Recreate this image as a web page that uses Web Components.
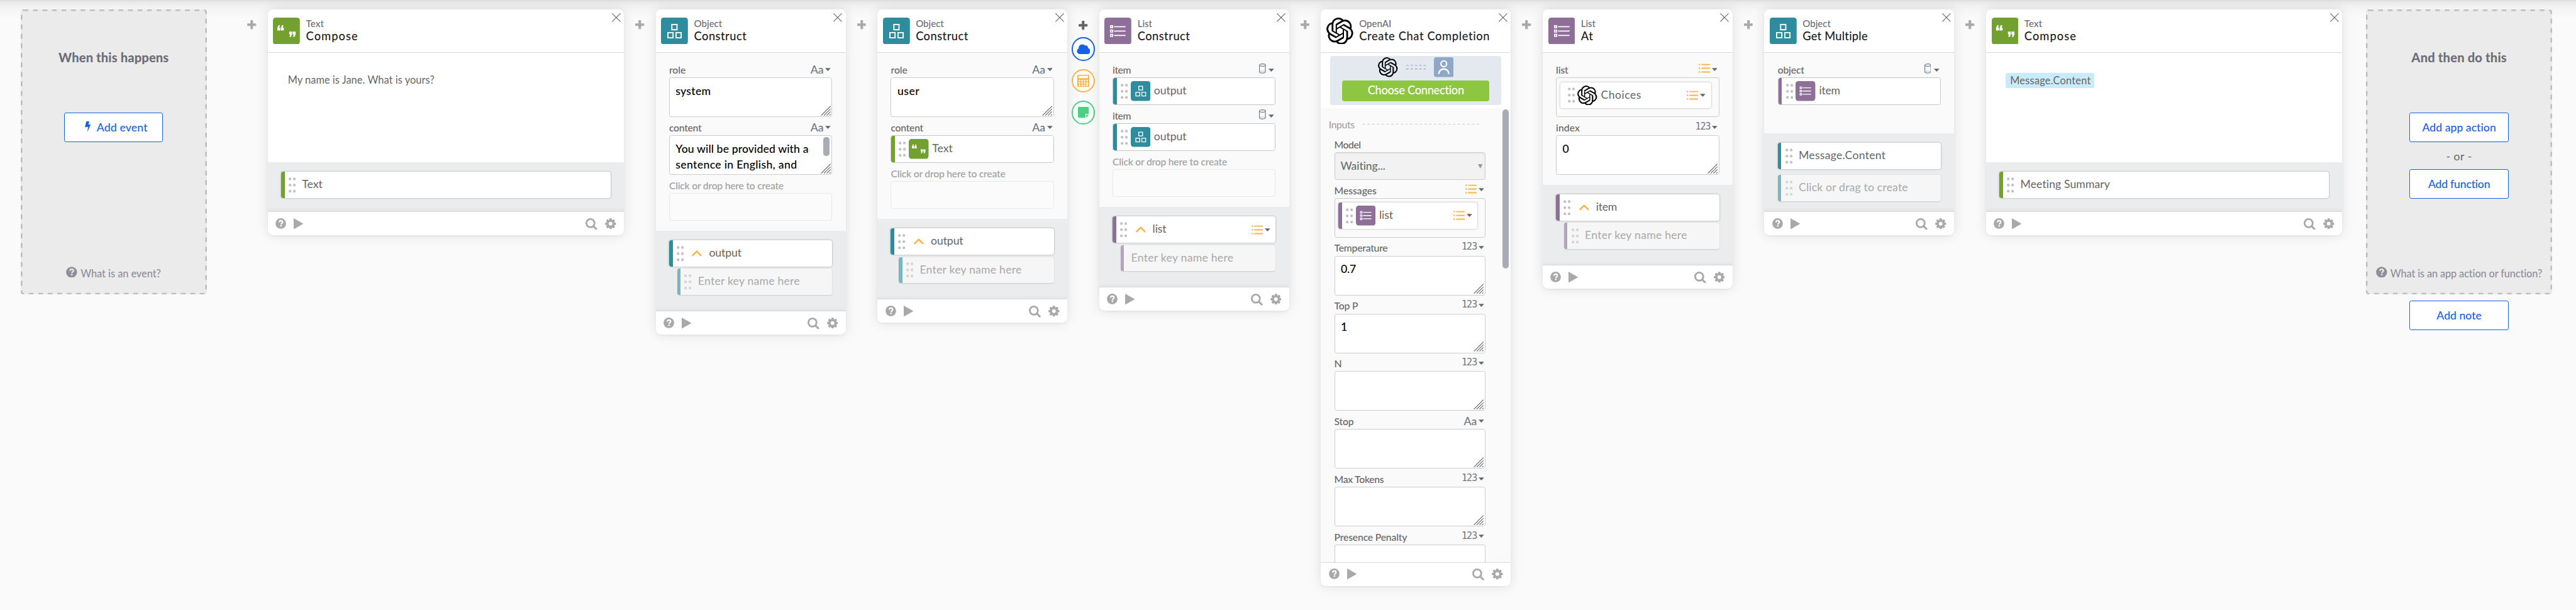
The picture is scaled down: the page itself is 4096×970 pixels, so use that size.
<!DOCTYPE html>
<html lang="en">
<head>
<meta charset="utf-8">
<title>Flow editor</title>
<style>
html{background:#fafafa;overflow:hidden}
body{margin:0;width:4096px;height:970px;overflow:hidden;font-family:Lato,"Open Sans",sans-serif;color:#666}
</style>
</head>
<body>
<flow-board>
  <drop-panel heading="When this happens" hw="277" help="What is an event?" pw="201">
    <blue-button icon="bolt" w="127">Add event</blue-button>
  </drop-panel>
  <plus-mark style="margin-left:74px"></plus-mark>

  <flow-card wide icon="quote" kind="Text" kw="43" name="Compose" nw="130" body="276">
    <fit-text w="371" style="font-size:26px;line-height:34px;padding:51px 0 0 17px">My name is Jane. What is yours?</fit-text>
    <flow-token slot="out" color="#73a12f" label="Text" w="50"></flow-token>
  </flow-card>
  <plus-mark></plus-mark>

  <flow-card icon="boxes" kind="Object" kw="69" name="Construct" nw="131">
    <flow-field label="role" w="40" type="Aa"><text-area><fit-text w="87">system</fit-text></text-area></flow-field>
    <flow-field label="content" w="80" type="Aa"><text-area thumb><fit-text w="335">You will be provided with a</fit-text><fit-text w="305">sentence in English, and</fit-text></text-area></flow-field>
    <flow-field ghost label="Click or drop here to create" w="288"><drop-box ghost></drop-box></flow-field>
    <flow-token slot="out" color="#2d8c9e" chevron label="output" w="80"></flow-token>
    <flow-token slot="out" color="#2d8c9e" ghost sub label="Enter key name here" w="257"></flow-token>
  </flow-card>
  <plus-mark></plus-mark>

  <flow-card icon="boxes" kind="Object" kw="69" name="Construct" nw="131">
    <flow-field label="role" w="40" type="Aa"><text-area><fit-text w="54">user</fit-text></text-area></flow-field>
    <flow-field label="content" w="80" type="Aa"><drop-box><flow-token flat color="#73a12f" icon="quote" label="Text" w="50"></flow-token></drop-box></flow-field>
    <flow-field ghost label="Click or drop here to create" w="288"><drop-box ghost></drop-box></flow-field>
    <flow-token slot="out" color="#2d8c9e" chevron label="output" w="80"></flow-token>
    <flow-token slot="out" color="#2d8c9e" ghost sub label="Enter key name here" w="257"></flow-token>
  </flow-card>
  <plus-mark open></plus-mark>

  <flow-card icon="list" kind="List" kw="35" name="Construct" nw="131">
    <flow-field label="item" w="44" type="cyl"><drop-box><flow-token flat color="#2d8c9e" icon="boxes" label="output" w="80"></flow-token></drop-box></flow-field>
    <flow-field label="item" w="44" type="cyl"><drop-box><flow-token flat color="#2d8c9e" icon="boxes" label="output" w="80"></flow-token></drop-box></flow-field>
    <flow-field ghost label="Click or drop here to create" w="288"><drop-box ghost></drop-box></flow-field>
    <flow-token slot="out" color="#8e6f98" chevron menu label="list" w="33"></flow-token>
    <flow-token slot="out" color="#8e6f98" ghost sub nodots label="Enter key name here" w="258"></flow-token>
  </flow-card>
  <plus-mark></plus-mark>

  <flow-card icon="openai" kind="OpenAI" kw="79" name="Create Chat Completion" nw="329" scroll>
    <connection-bar slot="bar"></connection-bar>
    <section-title></section-title>
    <flow-field label="Model" w="65"><select-box></select-box></flow-field>
    <flow-field label="Messages" w="105" type="list"><drop-box tall><flow-token inset color="#8e6f98" icon="list" menu label="list" w="33"></flow-token></drop-box></flow-field>
    <flow-field label="Temperature" w="133" type="123"><text-area><fit-text w="36">0.7</fit-text></text-area></flow-field>
    <flow-field label="Top P" w="58" type="123"><text-area><fit-text>1</fit-text></text-area></flow-field>
    <flow-field label="N" type="123"><text-area></text-area></flow-field>
    <flow-field label="Stop" w="47" type="Aa"><text-area></text-area></flow-field>
    <flow-field label="Max Tokens" w="124" type="123"><text-area></text-area></flow-field>
    <flow-field label="Presence Penalty" w="182" type="123"><text-area cut></text-area></flow-field>
  </flow-card>
  <plus-mark></plus-mark>

  <flow-card icon="list" kind="List" kw="35" name="At" nw="29">
    <flow-field label="list" w="29" type="list"><drop-box tall><flow-token inset color="#fff" icon="openai" menu label="Choices" w="100"></flow-token></drop-box></flow-field>
    <flow-field label="index" w="58" type="123"><text-area><fit-text>0</fit-text></text-area></flow-field>
    <flow-token slot="out" color="#8e6f98" chevron label="item" w="51"></flow-token>
    <flow-token slot="out" color="#8e6f98" ghost sub label="Enter key name here" w="258"></flow-token>
  </flow-card>
  <plus-mark></plus-mark>

  <flow-card icon="boxes" kind="Object" kw="69" name="Get Multiple" nw="163" body="203" outgap="15">
    <flow-field label="object" w="65" type="cyl"><drop-box><flow-token flat tight color="#8e6f98" icon="list" label="item" w="51"></flow-token></drop-box></flow-field>
    <flow-token slot="out" color="#2d8c9e" label="Message.Content" w="218"></flow-token>
    <flow-token slot="out" color="#2d8c9e" ghost label="Click or drag to create" w="275"></flow-token>
  </flow-card>
  <plus-mark></plus-mark>

  <flow-card wide icon="quote" kind="Text" kw="43" name="Compose" nw="130" body="276">
    <value-chip></value-chip>
    <flow-token slot="out" color="#73a12f" label="Meeting Summary" w="225"></flow-token>
  </flow-card>

  <last-column>
    <drop-panel heading="And then do this" hw="239" help="What is an app action or function?" pw="383">
      <blue-button w="185">Add app action</blue-button>
      <or-mark></or-mark>
      <blue-button w="155">Add function</blue-button>
    </drop-panel>
    <blue-button w="112" style="margin:16px auto 0">Add note</blue-button>
  </last-column>
</flow-board>

<script>
const svg = (w, h, inner, vb) => `<svg width="${w}" height="${h}" viewBox="${vb || `0 0 ${w} ${h}`}" fill="none">${inner}</svg>`;
const QM = '<path d="M0 13.5V7L3 0h3.6L5 6.4h2.4v7.1zM9 13.5V7l3-7h3.6L14 6.4h2.4v7.1z" fill="#fff"/>';
const OPENAI = '<path fill="#000" d="M22.2819 9.8211a5.9847 5.9847 0 0 0-.5157-4.9108 6.0462 6.0462 0 0 0-6.5098-2.9A6.0651 6.0651 0 0 0 4.9807 4.1818a5.9847 5.9847 0 0 0-3.9977 2.9 6.0462 6.0462 0 0 0 .7427 7.0966 5.98 5.98 0 0 0 .511 4.9107 6.051 6.051 0 0 0 6.5146 2.9001A5.9847 5.9847 0 0 0 13.2599 24a6.0557 6.0557 0 0 0 5.7718-4.2058 5.9894 5.9894 0 0 0 3.9977-2.9001 6.0557 6.0557 0 0 0-.7475-7.0729zm-9.022 12.6081a4.4755 4.4755 0 0 1-2.8764-1.0408l.1419-.0804 4.7783-2.7582a.7948.7948 0 0 0 .3927-.6813v-6.7369l2.02 1.1686a.071.071 0 0 1 .038.052v5.5826a4.504 4.504 0 0 1-4.4945 4.4944zm-9.6607-4.1254a4.4708 4.4708 0 0 1-.5346-3.0137l.142.0852 4.783 2.7582a.7712.7712 0 0 0 .7806 0l5.8428-3.3685v2.3324a.0804.0804 0 0 1-.0332.0615L9.74 19.9502a4.4992 4.4992 0 0 1-6.1408-1.6464zM2.3408 7.8956a4.485 4.485 0 0 1 2.3655-1.9728V11.6a.7664.7664 0 0 0 .3879.6765l5.8144 3.3543-2.0201 1.1685a.0757.0757 0 0 1-.071 0l-4.8303-2.7865A4.504 4.504 0 0 1 2.3408 7.872zm16.5963 3.8558L13.1038 8.364 15.1192 7.2a.0757.0757 0 0 1 .071 0l4.8303 2.7913a4.4944 4.4944 0 0 1-.6765 8.1042v-5.6772a.79.79 0 0 0-.407-.667zm2.0107-3.0231l-.142-.0852-4.7735-2.7818a.7759.7759 0 0 0-.7854 0L9.409 9.2297V6.8974a.0662.0662 0 0 1 .0284-.0615l4.8303-2.7866a4.4992 4.4992 0 0 1 6.6802 4.66zM8.3065 12.863l-2.02-1.1638a.0804.0804 0 0 1-.038-.0567V6.0742a4.4992 4.4992 0 0 1 7.3757-3.4537l-.142.0805L8.704 5.459a.7948.7948 0 0 0-.3927.6813zm1.0976-2.3654l2.602-1.4998 2.6069 1.4998v2.9994l-2.5974 1.4997-2.6067-1.4997Z"/>';
const tile = (name, s) => {
  if (name === 'openai') return svg(s, s, OPENAI, '0 0 24 24');
  const r = s > 60 ? 7 : 9.5;
  const bg = { quote: '#73a12f', boxes: '#2d8c9e', list: '#8e6f98' }[name];
  const art = {
    quote: `<g transform="translate(11 19)">${QM}</g><g transform="translate(57.4 49) rotate(180)">${QM}</g>`,
    boxes: '<path d="M27.500 17.500h13v13h-13zM17.500 38h13v13h-13zM38 38h13v13H38z" stroke="#fff" stroke-width="3"/>',
    list: [23, 34, 45].map(y => `<path d="M15.6 ${y - 2.6}h5.4v5.2h-5.4z" stroke="#fff" stroke-width="2.6"/><path d="M24.5 ${y}H53.5" stroke="#fff" stroke-width="2.8"/>`).join('')
  }[name];
  return svg(s, s, `<rect width="68" height="68" rx="${r}" fill="${bg}"/>${art}`, '0 0 68 68');
};
const help = (s, fill, hole) => svg(s, s, `<circle cx="14" cy="14" r="13.8" fill="${fill}"/><path d="M9.8 10.6C10.2 7.6 12 6.4 14.2 6.4c2.500 0 4.500 1.500 4.500 3.900 0 3-3.900 3.200-3.900 6" stroke="${hole}" stroke-width="3.500"/><rect x="12.600" y="18.200" width="4" height="3.700" rx=".6" fill="${hole}"/>`, '0 0 28 28');
const caret = '<svg width="14" height="8" viewBox="0 0 14 8"><path d="M0 .5h14L7 7.800z" fill="#666"/></svg>';
const listIcon = svg(29, 24, [2.5, 12, 21.5].map(y => `<circle cx="2" cy="${y}" r="2" fill="#ffb142"/><path d="M8 ${y}H27.500" stroke="#ffb142" stroke-width="3" stroke-linecap="round"/>`).join(''));
const closeIcon = svg(22, 22, '<path d="M.6.6l20.800 20.800M21.400.6L.6 21.400" stroke="#666" stroke-width="1.800"/>');
const gear = svg(28, 28, [0, 45, 90, 135].map(a => `<rect x="10.900" y=".3" width="6.200" height="27.400" rx="1.800" fill="#a9a9a9" transform="rotate(${a} 14 14)"/>`).join('') + '<circle cx="14" cy="14" r="10.300" fill="#a9a9a9"/><circle cx="14" cy="14" r="4.700" fill="#fff"/>');
const searchIcon = svg(30, 30, '<circle cx="12.500" cy="12.500" r="10.300" stroke="#a9a9a9" stroke-width="4.400"/><path d="M20 20l7.300 7.300" stroke="#a9a9a9" stroke-width="4.800" stroke-linecap="round"/>');
const cylinder = svg(17, 25, '<ellipse cx="8.500" cy="4" rx="7.500" ry="3" stroke="#6b7785" stroke-width="1.800"/><path d="M1 4v17c0 1.700 3.400 3 7.500 3s7.500-1.300 7.500-3V4" stroke="#6b7785" stroke-width="1.800"/><path d="M2.500 20.500c2-1.700 10-1.700 12 0" stroke="#6b7785" stroke-width="1.200" stroke-dasharray="2 1.500"/>');
const dots = svg(18, 39, [4, 19.500, 35].map(y => `<circle cx="3.500" cy="${y}" r="3.500" fill="#c3c3c3"/><circle cx="14.500" cy="${y}" r="3.500" fill="#c3c3c3"/>`).join(''));
const fit = (t, w, css = '') => `<fit-text ${w ? `w="${w}"` : ''} style="${css}">${t}</fit-text>`;

const define = (tag, css, html) => customElements.define(tag, class extends HTMLElement {
  constructor() { super(); this.attachShadow({ mode: 'open' }); }
  connectedCallback() {
    const a = n => this.getAttribute(n), has = n => this.hasAttribute(n);
    this.shadowRoot.innerHTML = `<style>:host{display:block;box-sizing:border-box}*{box-sizing:border-box}svg{display:block;flex:none}${css}</style>` + html(a, has);
  }
});

/* One line of text whose tracking is set so that it spans the width in `w`. */
const ruler = document.createElement('canvas').getContext('2d');
customElements.define('fit-text', class extends HTMLElement {
  connectedCallback() {
    if (!this.shadowRoot) this.attachShadow({ mode: 'open' }).innerHTML = '<style>:host{display:block;white-space:nowrap;flex:none}</style><slot></slot>';
    const w = +this.getAttribute('w');
    if (!w) return;
    requestAnimationFrame(() => this.track(w));
    this.track(w);
  }
  track(w) {
    const cs = getComputedStyle(this), t = this.textContent;
    if (!t) return;
    ruler.font = `${cs.fontWeight} ${cs.fontSize} Lato`;
    this.style.letterSpacing = ((w + 2 - ruler.measureText(t).width) / t.length).toFixed(3) + 'px';
  }
});

define('flow-board', ':host{width:4096px;height:970px;overflow:hidden;background:#fafafa}.z{zoom:.62957;display:flex;align-items:flex-start;width:6506px;height:1540px;padding:24px 0 0 52px;background:linear-gradient(#dcdcdc,#e9e9e9 5px,#f0f0f0 14px,#f6f6f6 26px,#fafafa 44px)}::slotted(*){flex:none}', () => '<div class="z"><slot></slot></div>');

define('drop-panel', `
:host{position:relative;display:flex;flex-direction:column;align-items:center;width:470px;height:720px;padding:102px 4px 41px;background:#ebebec;border-radius:6px}
.edge{position:absolute;inset:0}
h2{margin:0 0 119px;font:900 32px/40px Lato,sans-serif;color:#6e6e78}
.help{display:flex;gap:8px;margin-top:auto;font-size:26px;line-height:30px;color:#8f8f99;align-items:flex-start;font-weight:500}
.help fit-text{padding-top:3px;margin-bottom:-3px}`,
(a) => `<svg class="edge" width="470" height="720" fill="none"><rect x="2" y="2" width="466" height="716" rx="5" stroke="#bdbdbd" stroke-width="4" stroke-dasharray="12 12"/></svg>
<h2>${fit(a('heading'), a('hw'))}</h2><slot></slot><div class="help">${help(28, '#8f8f99', '#ebebec')}${fit(a('help'), a('pw'))}</div>`);

define('blue-button', ':host{display:flex;align-items:center;justify-content:center;gap:14px;width:250px;height:74px;padding-bottom:1px;border:2px solid #1862e0;border-radius:5px;background:#fff;color:#1862e0;font-size:28px;line-height:34px;position:relative;font-weight:500}svg{margin:-2px 0 0 14px}',
(a, has) => (has('icon') ? svg(15, 28, '<path d="M3.500 0H11L9 8.500l6-1.200L6 27.500 8 13.500l-8 1.700z" fill="#1862e0"/>') : '') + `<slot></slot>`);
customElements.whenDefined('blue-button').then(() => document.querySelectorAll('blue-button').forEach(b => {
  if (!b.querySelector('fit-text')) b.innerHTML = fit(b.textContent.trim(), b.getAttribute('w'));
}));

define('or-mark', ':host{height:69px;line-height:72px;font-size:28px}', () => fit('- or -', 64));
define('last-column', ':host{display:flex;flex-direction:column;margin-left:60px}', () => '<slot></slot>');

define('plus-mark', `
:host{position:relative;width:80px;padding-top:27px}
svg{margin:0 auto}
:host([open]){padding-top:29px}
.ring{width:60px;height:60px;border:4px solid var(--c);border-radius:50%;background:#fff;margin:0 auto 20px;display:flex;align-items:center;justify-content:center}
.first{margin-top:18px}`,
(a, has) => {
  const c = has('open') ? '#666' : '#a9a9a9';
  const plus = svg(23, 23, `<path d="M11.500 1.500v20M1.500 11.500h20" stroke="${c}" stroke-width="6.600"/><path d="M8.200 1.500q0-1.500 1.500-1.500h3.600q1.500 0 1.500 1.500zM8.200 21.500q0 1.500 1.500 1.500h3.600q1.500 0 1.500-1.500zM1.500 8.200Q0 8.200 0 9.700v3.600q0 1.500 1.500 1.500zM21.500 8.200q1.500 0 1.500 1.500v3.600q0 1.500-1.500 1.500z" fill="${c}"/>`);
  if (!has('open')) return plus;
  const holes = [8.500, 15, 21.500].map(x => [14.500, 20.500, 26.500].map(y => `<circle cx="${x - 3}" cy="${y}" r="2.100" fill="#fff"/>`).join('')).join('');
  return plus + `<div class="ring first" style="--c:#1862e0">${svg(34, 26, '<path d="M8 25.500a7.500 7.500 0 0 1-3-14.300A9.500 9.500 0 0 1 21.500 4 5.300 5.300 0 0 1 28.300 10.500 7.600 7.600 0 0 1 26.500 25.500z" fill="#1862e0"/>')}</div>
<div class="ring" style="--c:#ffb142">${svg(30, 31, `<rect width="30" height="31" rx="2.500" fill="#ffb142"/><rect x="3" y="2.500" width="24" height="6" fill="#fff"/>${holes}<circle cx="24.800" cy="14.500" r="2.100" fill="#fff"/><rect x="22.700" y="18.400" width="4.200" height="10.200" rx="2.100" fill="#fff"/>`)}</div>
<div class="ring" style="--c:#4bcf80">${svg(28, 28, '<path d="M2 0h24q2 0 2 2v16h-9v9.500H2q-2 0-2-2V2q0-2 2-2zM21 20h7l-7 7.500z" fill="#4bcf80"/>')}</div>`;
});

define('flow-card', `
:host{display:flex;flex-direction:column;width:480px;border-radius:13px;background:#fff;box-shadow:0 0 32px rgba(0,0,0,.11),0 2px 6px rgba(0,0,0,.04);position:relative}
:host([wide]){width:900px}
:host([scroll]){height:1456px}
header{display:flex;height:110px;padding:20px 9px 0 14px;border-bottom:2px solid #d9d9dd;gap:15px}
.t{flex:1;font-size:24px;line-height:30px;color:#6e6e78;font-weight:500}
.t .n{font-size:29px;line-height:34px;color:#1d1d22;font-weight:500}
header>svg:last-child{margin-top:-10px}
.body{background:#fafafa;padding:16px 34px 25px}
:host([wide]) .body{background:#fff;padding-top:0}
:host([scroll]) .body{flex:1;min-height:0;overflow:hidden;padding:0 64px 0 34px}
.thumb{position:absolute;right:6px;top:252px;width:16px;height:402px;border-radius:8px;background:#a9acb6}
.out{display:flex;flex-direction:column;background:linear-gradient(#ebeced,#ebeced calc(100% - 10px),#e4e5e8);padding:24px 34px 40px}
footer{display:flex;height:60px;border-top:2px solid #d9d9dd;padding:15px 20px 0 20px;gap:19px;border-radius:0 0 13px 13px}
footer .sp{flex:1}`,
(a, has) => `<header>${tile(a('icon'), 68)}<div class="t">${fit(a('kind'), a('kw'))}<div class="n">${fit(a('name'), a('nw'))}</div></div>${closeIcon}</header>
<slot name="bar"></slot><div class="body" style="${a('body') ? `height:${a('body')}px` : ''}"><slot></slot></div>
${has('scroll') ? '<div class="thumb"></div>' : `<div class="out" style="gap:${a('outgap') || 6}px;${a('outgap') ? 'padding-bottom:26px' : has('wide') ? 'padding-bottom:34px' : ''}"><slot name="out"></slot></div>`}
<footer>${help(27, '#a9a9a9', '#fff')}${svg(25, 28, '<path d="M0 0l24.500 14L0 28z" fill="#a9a9a9"/>')}<span class="sp"></span>${searchIcon}${gear}</footer>`);

define('flow-field', `
.l{display:flex;align-items:flex-end;justify-content:space-between;height:46px;padding-right:4px;font-size:25px;line-height:40px;font-weight:500}
:host([ghost]) .l{color:#a0a0a0}
.k{display:flex;align-items:center;gap:4px;height:43px;color:#6b7785}
.k>svg{margin-top:-3px}.k>svg:last-child{margin-top:1px}
.k.cyl{gap:7px}.k.cyl>svg:last-child{margin-top:5px}
.Aa{font-size:28px;font-weight:500;padding-top:3px}
.num{font:24px/44px "DejaVu Sans Mono",monospace;letter-spacing:-1.600px}`,
(a) => {
  const t = a('type');
  const k = !t ? '' : t === 'Aa' ? `<span class="Aa">Aa</span>` : t === '123' ? '<span class="num">123</span>' : t === 'list' ? listIcon : cylinder;
  return `<div class="l">${fit(a('label'), a('w'))}${t ? `<span class="k ${t === 'Aa' ? '' : t}" style="font-size:inherit">${k}${caret}</span>` : ''}</div><slot></slot>`;
});

define('text-area', `
:host{position:relative;height:100px;border:2px solid #ccc;border-radius:6px;background:#fff;padding:14px 15px 0;font-size:28px;line-height:39px;color:#000;font-weight:500}
:host([cut]){height:44px;border-bottom:0;border-radius:6px 6px 0 0}
.grip{position:absolute;right:2px;bottom:2px}
.thumb{position:absolute;right:6px;top:2px;width:16px;height:48px;border-radius:7px;background:#a9acb6}`,
(a, has) => `<slot></slot>${has('thumb') ? '<div class="thumb"></div>' : ''}${has('cut') ? '' : '<svg class="grip" width="26" height="26" fill="none"><path d="M1 25L25 1M8 25L25 8M15 25l10-10M22 25l3-3" stroke="#666" stroke-width="1.700"/></svg>'}`);

define('drop-box', `
:host{height:70px;border:2px solid #c6c6c6;border-radius:6px;overflow:hidden;background:#fff}
:host([ghost]){border-color:#e8e8e8;background:#fbfbfb}
:host([tall]){height:100px;background:#fafafa;padding:10px 19px 0 9px;border-color:#ccc}`, () => '<slot></slot>');

define('select-box', `
:host{display:flex;justify-content:space-between;height:70px;border:2px solid #ccc;border-radius:6px;background:#f2f2f2;box-shadow:inset 0 2px 5px rgba(0,0,0,.06);padding:0 6px 0 14px;font-size:28px;line-height:66px;color:#6c6c6c;font-weight:500}
svg{margin-top:29px}`, () => fit('Waiting...', 112) + svg(12, 11, '<path d="M0 0h12L6 11z" fill="#999"/>'));

define('flow-token', `
:host{display:flex;align-items:center;height:66px;background:#fff;border-radius:6px;overflow:hidden;box-shadow:0 0 4px rgba(0,0,0,.38);font-size:28px;line-height:65px;color:#666}
:host([flat]){box-shadow:none;border-radius:4px}
:host([sub]){margin-left:20px}
:host([ghost]){background:#f6f6f6;color:#a9a9a9;box-shadow:0 1px 3px rgba(0,0,0,.14)}
.s{width:9px;align-self:stretch;background:var(--c);margin-right:10px}
:host([ghost]) .s,:host([ghost]) .s+svg{opacity:.62}
:host([nodots]) .s{margin-right:2px}
.i{margin-left:7px;margin-right:9px}
.v{margin:0 18px 0 21px}
.p{align-self:flex-start}
.p.gap{margin-left:16px}
.m{display:flex;align-items:center;gap:4px;margin:0 14px 0 auto;height:24px}`,
(a, has) => `<div class="s" style="--c:${a('color')}"></div>${has('nodots') ? '' : dots}
${has('icon') ? `<div class="i">${tile(a('icon'), 50)}</div>` : ''}${has('chevron') ? `<div class="v">${svg(25, 16, '<path d="M1 14.200L12.500 2.800 24 14.200" stroke="#ffb142" stroke-width="4"/>')}</div>` : ''}
<div class="p ${has('icon') || has('chevron') ? '' : 'gap'}">${fit(a('label'), a('w'))}</div>
${has('menu') ? `<div class="m">${listIcon}${caret}</div>` : ''}`);

define('connection-bar', `
:host{padding:8px 24px;height:140px}
.b{height:124px;background:#e4e8ef;border-radius:6px;padding-top:3px}
.r{display:flex;justify-content:center;align-items:center;gap:20px}
.btn{width:372px;height:52px;margin:8px auto 0;border-radius:6px;background:#8dc641;color:#fff;font-size:29px;line-height:50px;font-weight:500;display:flex;justify-content:center}`,
() => `<div class="b"><div class="r">${tile('openai', 50)}${svg(50, 12, '<path d="M0 1.500h50M0 10.500h50" stroke="#8fa8c8" stroke-width="1.800" stroke-dasharray="6 5"/>')}${svg(50, 50, '<rect width="50" height="50" rx="6" fill="#8fa8c8"/><circle cx="25" cy="16.500" r="7.300" stroke="#fff" stroke-width="3.400"/><path d="M12.500 42.500c0-17 25-17 25 0" stroke="#fff" stroke-width="3.800"/>')}</div><div class="btn">${fit('Choose Connection', 242)}</div></div>`);

define('section-title', ':host{display:flex;align-items:center;gap:20px;height:64px;margin:0 -51px 0 -14px;padding-top:16px;font-size:25px;color:#999}svg{margin-top:0}.w{height:40px;line-height:42px}',
() => `<div class="w">${fit('Inputs', 63)}</div>${svg(300, 2, '<path d="M0 1h300" stroke="#ccc" stroke-width="2" stroke-dasharray="6 6.100"/>')}`);

define('value-chip', ':host{display:flex;width:223px;height:39px;margin:50px 0 0 16px;padding-left:11px;background:#c9ecfc;border-radius:4px;font-size:26px;line-height:38px}', () => fit('Message.Content', 202));
</script>
</body>
</html>
